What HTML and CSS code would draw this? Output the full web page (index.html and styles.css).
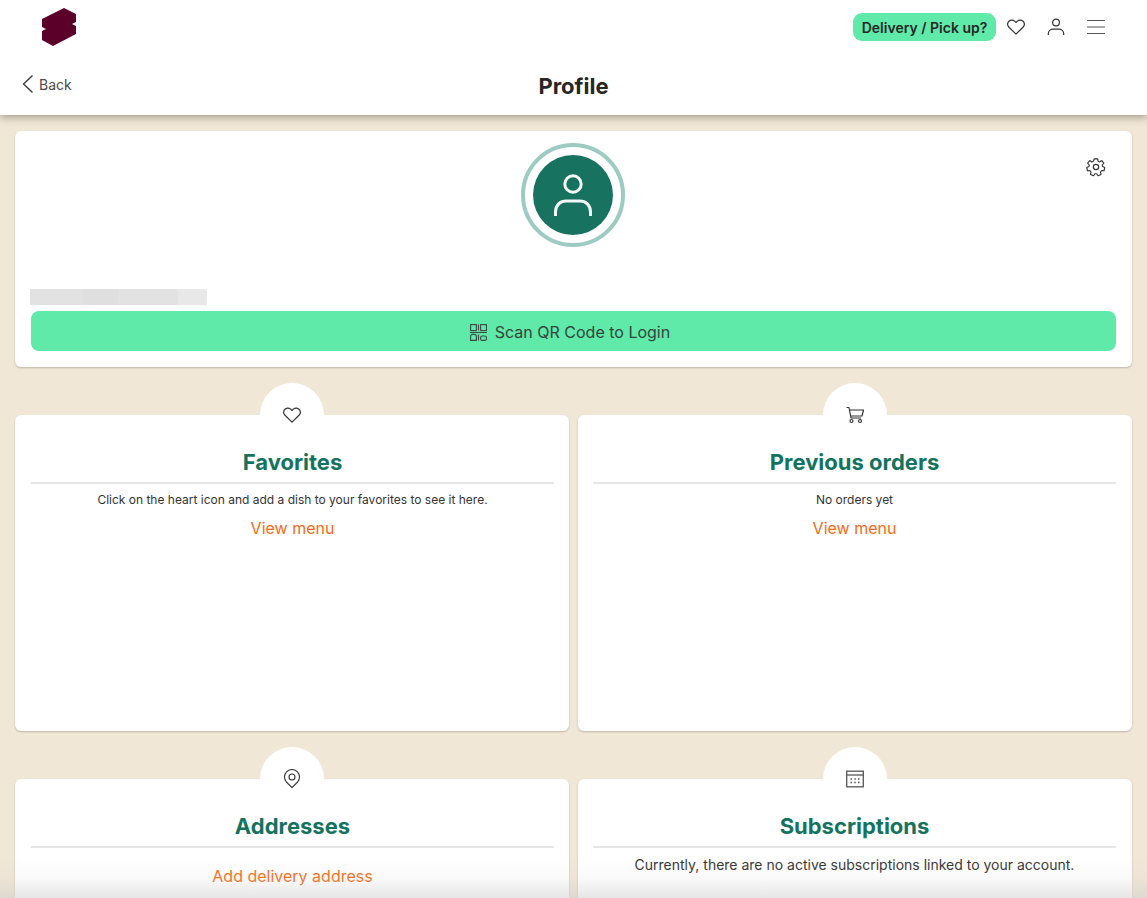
FILE: index.html
```html
<!DOCTYPE html>
<html lang="en">
<head>
<meta charset="utf-8">
<title>Profile</title>
<link rel="stylesheet" href="styles.css">
</head>
<body>
<header class="header">
  <div class="topbar">
    <svg class="logo" width="36" height="40" viewBox="0 0 36 40"><polygon fill="#5a0029" points="23,0 35,6 35,14 31,16 35,18 35,26 12,38 1,32 1,23 5,21 1,19 1,11"/></svg>
    <div class="actions">
      <button class="pill">Delivery / Pick up?</button>
      <svg class="icon heart" width="20" height="20" viewBox="0 0 24 24" fill="none" stroke="#333" stroke-width="1.4" stroke-linejoin="round"><path d="M12 20.500 3.600 12.300A5.300 5.300 0 0 1 3 5.600a5.200 5.200 0 0 1 7.400-.6L12 6.600 13.600 5a5.200 5.200 0 0 1 7.400.6 5.300 5.300 0 0 1-.6 6.700z"/></svg>
      <svg class="icon" width="20" height="20" viewBox="0 0 20 20" fill="none" stroke="#333" stroke-width="1.200"><circle cx="10" cy="5.500" r="3.400"/><path d="M2.300 18v-1.200c0-2.800 2.200-4.600 5-4.600h5.400c2.800 0 5 1.800 5 4.600V18"/></svg>
      <svg class="icon" width="20" height="20" viewBox="0 0 20 20" stroke="#555" stroke-width="1.200"><path d="M1 3.500h18M1 10h18M1 16.500h18"/></svg>
    </div>
  </div>
  <div class="titlebar">
    <a class="back"><svg width="14" height="20" viewBox="0 0 14 20" fill="none" stroke="#333" stroke-width="1.300"><path d="M11.500 1.500 2.500 10l9 8.500"/></svg><span>Back</span></a>
    <h1 class="title">Profile</h1>
  </div>
</header>
<main class="main">
  <section class="card profile">
    <svg class="gear" width="20" height="20" viewBox="0 0 24 24" fill="none" stroke="#333" stroke-width="1.400" stroke-linejoin="round"><circle cx="12" cy="12" r="3.200"/><path d="M10 2.200h4l.6 2.900 1.800.8 2.500-1.600 2.500 3-1.900 2.300.4 1.900 2.600 1.200-.9 3.800-2.900-.1-1.300 1.600.6 2.900-3.600 1.600-1.700-2.400h-2l-1.700 2.400-3.600-1.600.6-2.900-1.300-1.600-2.900.1-.9-3.800 2.600-1.200.4-1.900-1.900-2.300 2.500-3 2.500 1.600 1.800-.8z"/></svg>
    <div class="avatar-ring">
      <div class="avatar">
        <svg width="40" height="42" viewBox="0 0 40 42" fill="none" stroke="#f4f8f6" stroke-width="3"><circle cx="20" cy="10" r="8.200"/><path d="M2.500 42v-4c0-7 5-11 10.500-11h14c5.500 0 10.500 4 10.500 11v4"/></svg>
      </div>
    </div>
    <div class="redacted"><i class="r1"></i><i class="r2"></i><i class="r3"></i><i class="r4"></i></div>
    <button class="scan">
      <svg width="17" height="17" viewBox="0 0 17 17" fill="none" stroke="#3a4a44" stroke-width="1.100"><rect x=".6" y=".6" width="5.800" height="6"/><rect x="10.600" y=".6" width="5.800" height="6"/><path d="M8.500 .5v6M0 8.500h17M8.500 10.500v6"/><path d="M.6 16.400v-4a2 2 0 0 1 2-2h1.800a2 2 0 0 1 2 2v4z"/><rect x="10.600" y="12" width="5.800" height="4.400" rx="1.500"/></svg>
      <span>Scan QR Code to Login</span>
    </button>
  </section>
  <div class="grid">
    <section class="card tile">
      <div class="bubble"><svg class="bubble-icon" width="20" height="20" viewBox="0 0 24 24" fill="none" stroke="#333" stroke-width="1.400" stroke-linejoin="round"><path d="M12 20.500 3.600 12.300A5.300 5.300 0 0 1 3 5.600a5.200 5.200 0 0 1 7.400-.6L12 6.600 13.600 5a5.200 5.200 0 0 1 7.400.6 5.300 5.300 0 0 1-.6 6.700z"/></svg></div>
      <h2 class="tile-title">Favorites</h2>
      <p class="note">Click on the heart icon and add a dish to your favorites to see it here.</p>
      <a class="link">View menu</a>
    </section>
    <section class="card tile">
      <div class="bubble"><svg width="20" height="20" viewBox="0 0 20 20" fill="none" stroke="#333" stroke-width="1.200" stroke-linejoin="round"><path d="M1.500 2.500h2.500l2 10.500h10M4.500 5h14l-1.500 6H5.500"/><circle cx="6.500" cy="16" r="1.500"/><circle cx="15" cy="16" r="1.500"/></svg></div>
      <h2 class="tile-title">Previous orders</h2>
      <p class="note">No orders yet</p>
      <a class="link">View menu</a>
    </section>
    <section class="card tile">
      <div class="bubble"><svg width="20" height="20" viewBox="0 0 20 20" fill="none" stroke="#333" stroke-width="1.100" stroke-linejoin="round"><path d="M10 18.700 4.400 13a7.500 7.500 0 1 1 11.200 0z"/><circle cx="10" cy="8" r="3"/></svg></div>
      <h2 class="tile-title">Addresses</h2>
      <a class="link link-add">Add delivery address</a>
    </section>
    <section class="card tile">
      <div class="bubble"><svg width="20" height="20" viewBox="0 0 20 20" fill="none" stroke="#555" stroke-width="1.300"><rect x="1.700" y="2.200" width="16.600" height="15.600"/><path d="M1.700 6h16.600"/><path d="M5.500 10h1.500M9.300 10h1.500M13 10h1.500M5.500 13.500h1.500M9.300 13.500h1.500M13 13.500h1.500" stroke-width="1.500"/></svg></div>
      <h2 class="tile-title">Subscriptions</h2>
      <p class="note note-lg">Currently, there are no active subscriptions linked to your account.</p>
    </section>
  </div>
</main>
<div class="fade"></div>
</body>
</html>
```
FILE: styles.css
```css
* { box-sizing: border-box; }
html, body { margin: 0; height: 898px; overflow: hidden; }
body { background: #f1e7d7; font-family: Inter, "Liberation Sans", sans-serif; color: #262626; position: relative; }
.header { height: 115px; background: #fff; box-shadow: 0 2px 8px rgba(60, 50, 30, .45); position: relative; z-index: 2; }
.topbar { height: 55px; display: flex; justify-content: space-between; padding: 0 41px; }
.logo { margin-top: 8px; }
.actions { display: flex; align-items: flex-start; padding-top: 13px; }
.pill { width: 143px; height: 28px; border: 0; border-radius: 9px; background: #5feaa9; font: 600 14px/28px Inter, sans-serif; color: #262626; padding: 1px 0 0; }
.icon { margin-top: 4px; margin-left: 20px; }
.icon.heart { margin-left: 10px; }
.titlebar { position: relative; height: 60px; display: flex; justify-content: center; align-items: center; }
.back { position: absolute; left: 21px; top: 19px; display: flex; align-items: center; gap: 4px; font-size: 14px; color: #4a4a4a; }
.title { margin: 1px 0 0; font-size: 22px; font-weight: 700; line-height: 30px; color: #262626; }
.main { padding: 16px 15px 0; }
.card { background: #fff; border-radius: 6px; box-shadow: 0 1px 2px rgba(80, 70, 50, .3); position: relative; }
.profile { height: 236px; padding: 12px 16px 0; display: flex; flex-direction: column; }
.gear { position: absolute; top: 26px; right: 26px; }
.avatar-ring { width: 104px; height: 104px; border: 4px solid #9ccbc2; border-radius: 50%; align-self: center; margin-right: 1px; display: flex; align-items: center; justify-content: center; }
.avatar { width: 80px; height: 80px; border-radius: 50%; background: #177360; display: flex; align-items: center; justify-content: center; }
.redacted { display: flex; width: 177px; height: 16px; margin: 42px 0 0 -1px; }
.redacted i { display: block; height: 100%; }
.r1 { width: 53px; background: #e2e2e2; }
.r2 { width: 36px; background: #dfdfdf; }
.r3 { width: 59px; background: #e2e2e2; }
.r4 { width: 29px; background: #e8e8e8; }
.scan { height: 40px; margin-top: 6px; border: 0; border-radius: 8px; background: #5feaa9; display: flex; align-items: center; justify-content: center; gap: 8px; font: 400 16px Inter, sans-serif; color: #35443e; padding: 2px 7px 0 0; width: 100%; }
.grid { display: grid; grid-template-columns: 554px 554px; column-gap: 9px; row-gap: 48px; margin-top: 48px; grid-auto-rows: 316px; }
.tile { padding: 32px 15px 0 16px; text-align: center; }
.tile:nth-child(even) { padding: 32px 16px 0 15px; }
.bubble { position: absolute; top: -32px; left: 50%; margin-left: -32px; width: 64px; height: 64px; border-radius: 50%; background: #fff; display: flex; align-items: center; justify-content: center; }
.tile-title { margin: 0; height: 37px; font-size: 22px; font-weight: 700; line-height: 30px; color: #14735f; border-bottom: 2px solid #e6e6e6; }
.note { margin: 8px 0 0; font-size: 12px; line-height: 16px; color: #333; }
.note-lg { font-size: 14px; line-height: 20px; margin-top: 7px; }
.link { display: block; margin-top: 8px; font-size: 16px; line-height: 24px; color: #f76b15; }
.link-add { margin-top: 16px; }
.fade { position: absolute; left: 0; right: 0; bottom: 0; height: 40px; background: linear-gradient(to bottom, rgba(200, 200, 200, 0), rgba(200, 200, 200, .1) 50%, rgba(200, 200, 200, .45)); z-index: 3; }
```
